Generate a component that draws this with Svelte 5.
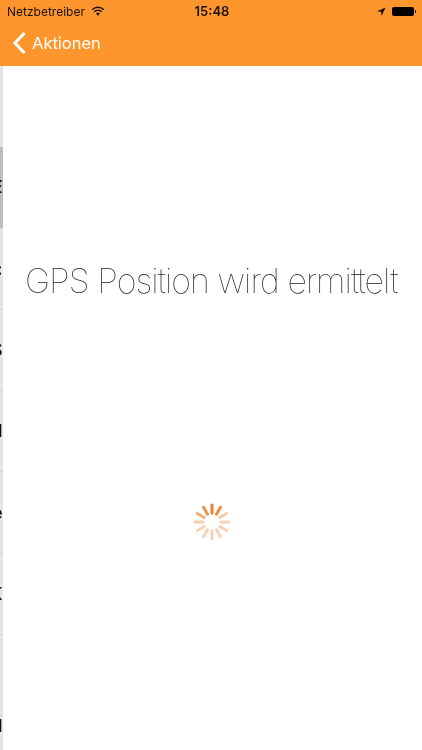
<script lang="ts">
  // rows of the list that stays behind the sliding panel
  const rows = [
    { label: "", active: false, top: false },
    { label: "E", active: true, top: false },
    { label: ":", active: false, top: false },
    { label: "S", active: false, top: false },
    { label: "l", active: false, top: false },
    { label: "e", active: false, top: false },
    { label: "K", active: false, top: false },
    { label: "", active: false, top: false },
    { label: "l", active: false, top: true },
  ];

  const spokes = Array.from({ length: 12 }, (_, i) => i);
  const fade = [1, 0.9, 0.4, 0.35, 0.35, 0.35, 0.35, 0.35, 0.35, 0.4, 0.65, 0.85];
</script>

<div class="screen">
  <header class="topbar">
    <div class="status">
      <div class="status-left">
        <span>Netzbetreiber</span>
        <svg class="wifi" viewBox="0 0 16 12" width="14" height="10" fill="none" stroke="#1a1208" stroke-width="1.8">
          <path d="M1 4.4a10 10 0 0 1 14 0" />
          <path d="M3.4 6.9a6.6 6.6 0 0 1 9.2 0" />
          <path d="M8 11.6 5.6 9.1a3.4 3.4 0 0 1 4.8 0z" fill="#1a1208" stroke="none" />
        </svg>
      </div>
      <span class="clock">15:48</span>
      <div class="status-right">
        <svg viewBox="0 0 10 10" width="9" height="9" fill="#1a1208"><path d="M9.5.5 0 4.8l4.6.5.5 4.6z" /></svg>
        <div class="battery"></div>
      </div>
    </div>
    <div class="navbar">
      <button class="back">
        <svg viewBox="0 0 14 24" width="14" height="24" fill="none" stroke="#fff" stroke-width="3"><path d="M12.5 2 3 12l9.5 10" /></svg>
        Aktionen
      </button>
    </div>
  </header>

  <main class="body">
    <div class="behind">
      {#each rows as row}
        <div class="row" class:active={row.active} class:top={row.top}><span>{row.label}</span></div>
      {/each}
    </div>
    <section class="panel">
      <h1>GPS Position wird ermittelt</h1>
      <svg class="spinner" viewBox="0 0 40 40" width="40" height="40" stroke-width="3" stroke-linecap="round">
        {#each spokes as i}
          <line
            x1="20"
            y1="3"
            x2="20"
            y2="11"
            stroke="#e8812f"
            stroke-opacity={fade[i]}
            transform="rotate({i * 30} 20 20)"
          />
        {/each}
      </svg>
    </section>
  </main>
</div>

<style>
  :global(body) {
    margin: 0;
    background: #fff;
  }

  .screen {
    width: 422px;
    height: 750px;
    display: flex;
    flex-direction: column;
    overflow: hidden;
    font-family: Inter, "Liberation Sans", sans-serif;
    will-change: transform;
  }

  .topbar {
    height: 66px;
    flex: none;
    background: #ff962d;
    display: flex;
    flex-direction: column;
  }

  .status {
    height: 22px;
    display: grid;
    grid-template-columns: 1fr auto 1fr;
    align-items: center;
    padding: 0 7px;
    font-size: 12px;
    color: #1a1208;
  }

  .status-left {
    display: flex;
    align-items: center;
    gap: 6px;
  }

  .clock {
    font-weight: 600;
    font-size: 13px;
    padding-left: 2px;
  }

  .status-right {
    display: flex;
    align-items: center;
    justify-content: flex-end;
    gap: 6px;
    padding-right: 1px;
  }

  .battery {
    width: 22px;
    height: 9px;
    background: #000;
    border-radius: 2px;
    position: relative;
  }

  .battery::after {
    content: "";
    position: absolute;
    right: -2px;
    top: 3px;
    width: 1px;
    height: 3px;
    background: #1a1208;
  }

  .navbar {
    flex: 1;
    display: flex;
    align-items: center;
    padding: 0 0 2px 12px;
  }

  .back {
    display: flex;
    align-items: center;
    gap: 6px;
    padding: 0;
    background: none;
    border: none;
    color: #fff;
    font-family: inherit;
    font-size: 16.5px;
  }

  .body {
    flex: 1;
    display: flex;
    min-height: 0;
  }

  .behind {
    width: 2.5px;
    flex: none;
    background: #e6e6e6;
    overflow: hidden;
  }

  .row {
    height: 81.3px;
    box-sizing: border-box;
    border-bottom: 1px solid #d4d4d4;
    display: flex;
    align-items: center;
    justify-content: flex-end;
    font-size: 17px;
    font-weight: 600;
    color: #111;
    white-space: nowrap;
  }

  .row:first-child {
    border-bottom: none;
  }

  .row.active {
    background: #bdbdbd;
  }

  .row.top {
    align-items: flex-start;
  }

  .row span {
    flex: none;
  }

  .panel {
    flex: 1;
    background: #fff;
    display: flex;
    flex-direction: column;
    align-items: center;
  }

  h1 {
    margin: 193px 2px 0 0;
    font-family: Inter, sans-serif;
    font-size: 34px;
    font-weight: 100;
    letter-spacing: -0.95px;
    color: #222;
    white-space: nowrap;
    line-height: 44px;
  }

  .spinner {
    margin-top: 199px;
  }
</style>
